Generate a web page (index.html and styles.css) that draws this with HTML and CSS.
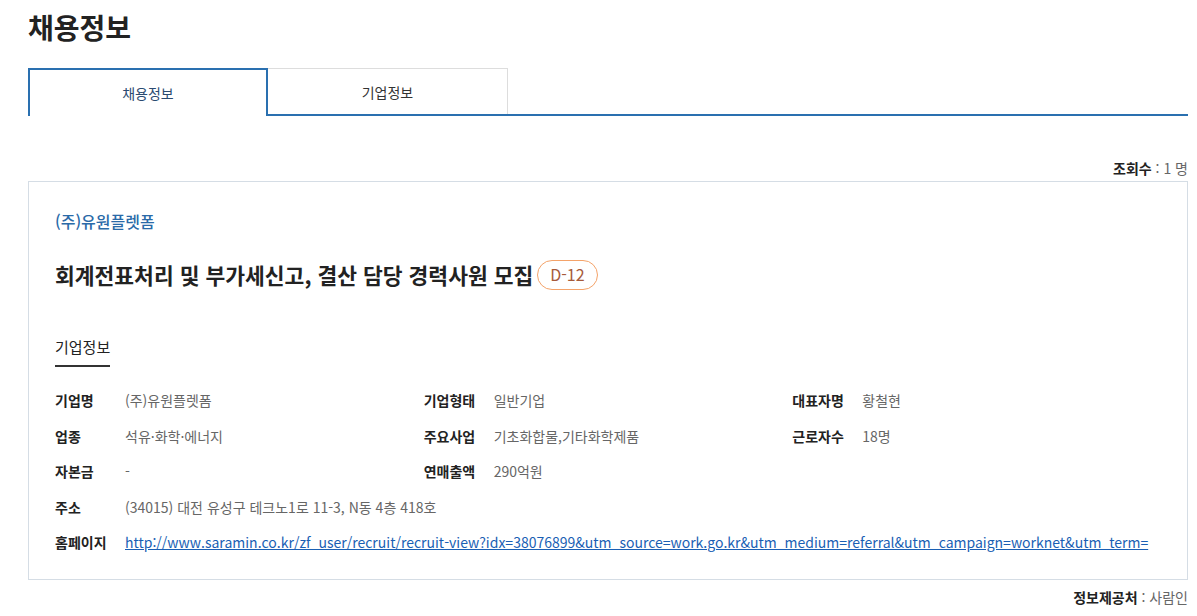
FILE: index.html
```html
<!DOCTYPE html>
<html lang="ko">
<head>
  <meta charset="UTF-8" />
  <title>채용정보</title>
  <link rel="stylesheet" href="styles.css">
</head>
<body>
  <div class="wrap">
    <h1>채용정보</h1>

    <div class="tabs">
      <a class="tab active">채용정보</a>
      <a class="tab">기업정보</a>
    </div>

    <p class="views"><strong>조회수</strong> : 1 명</p>

    <div class="job-box">
      <p class="company">(주)유원플렛폼</p>
      <h2 class="job-title">회계전표처리 및 부가세신고, 결산 담당 경력사원 모집 <span class="dday">D-12</span></h2>

      <h3 class="sub-title"><span>기업정보</span></h3>

      <div class="info-grid">
        <div class="item"><span class="label">기업명</span><span class="value">(주)유원플렛폼</span></div>
        <div class="item"><span class="label">기업형태</span><span class="value">일반기업</span></div>
        <div class="item"><span class="label">대표자명</span><span class="value">황철현</span></div>

        <div class="item"><span class="label">업종</span><span class="value">석유·화학·에너지</span></div>
        <div class="item"><span class="label">주요사업</span><span class="value">기초화합물,기타화학제품</span></div>
        <div class="item"><span class="label">근로자수</span><span class="value">18명</span></div>

        <div class="item"><span class="label">자본금</span><span class="value">-</span></div>
        <div class="item"><span class="label">연매출액</span><span class="value">290억원</span></div>
        <div class="item"></div>

        <div class="item full"><span class="label">주소</span><span class="value">(34015) 대전 유성구 테크노1로 11-3, N동 4층 418호</span></div>
        <div class="item full"><span class="label">홈페이지</span><a class="value link" href="#">http://www.saramin.co.kr/zf_user/recruit/recruit-view?idx=38076899&amp;utm_source=work.go.kr&amp;utm_medium=referral&amp;utm_campaign=worknet&amp;utm_term=</a></div>
      </div>
    </div>

    <p class="source"><strong>정보제공처</strong> : 사람인</p>
  </div>
</body>
</html>
```

FILE: styles.css
```css
body {
  margin: 0;
  font-family: "Noto Sans CJK KR", "Noto Sans", sans-serif;
  color: #222;
  background: #fff;
}

.wrap {
  padding: 0 9px 0 28px;
}

h1 {
  margin: 6px 0 0;
  font-size: 28px;
  font-weight: bold;
  line-height: 42px;
  color: #222;
}

.tabs {
  display: flex;
  margin-top: 20px;
  border-bottom: 2px solid #2a70b0;
}

.tab {
  width: 240px;
  height: 46px;
  line-height: 46px;
  text-align: center;
  font-size: 14px;
  color: #333;
  box-sizing: border-box;
  border: 1px solid #ddd;
  border-left: none;
  border-bottom: none;
  cursor: pointer;
}

.tab.active {
  border: 2px solid #2a70b0;
  border-bottom: none;
  height: 48px;
  margin-bottom: -2px;
  background: #fff;
  color: #2a4a70;
}

.views {
  margin: 42px 0 0;
  text-align: right;
  font-size: 14px;
  line-height: 20px;
  color: #666;
}

.views strong,
.source strong {
  color: #222;
}

.job-box {
  margin-top: 3px;
  border: 1px solid #d5dde5;
  padding: 26px 26px 25px;
}

.company {
  margin: 0;
  font-size: 16px;
  font-weight: 500;
  line-height: 26px;
  color: #2a6aa8;
}

.job-title {
  margin: 25px 0 0;
  font-size: 21.5px;
  font-weight: bold;
  line-height: 32px;
  color: #222;
  display: flex;
  align-items: center;
  gap: 4px;
}

.dday {
  display: inline-block;
  height: 28px;
  line-height: 27px;
  padding: 0 12px;
  border: 1px solid #f4a36a;
  border-radius: 15px;
  font-size: 16px;
  font-weight: normal;
  color: #a65a3a;
}

.sub-title {
  margin: 44px 0 0;
  font-size: 15px;
  font-weight: normal;
  line-height: 24px;
}

.sub-title span {
  display: inline-block;
  padding-bottom: 6px;
  border-bottom: 2px solid #333;
}

.info-grid {
  display: grid;
  grid-template-columns: repeat(3, 1fr);
  margin-top: 21px;
  row-gap: 11.5px;
}

.item {
  display: flex;
  font-size: 14px;
  line-height: 24px;
}

.item.full {
  grid-column: 1 / -1;
}

.label {
  width: 70px;
  flex-shrink: 0;
  font-weight: bold;
  color: #222;
}

.value {
  color: #666;
}

.link {
  color: #1a5fb4;
  text-decoration: underline;
  white-space: nowrap;
}

.source {
  margin: 7px 0 0;
  text-align: right;
  font-size: 14px;
  line-height: 20px;
  color: #666;
}
```
